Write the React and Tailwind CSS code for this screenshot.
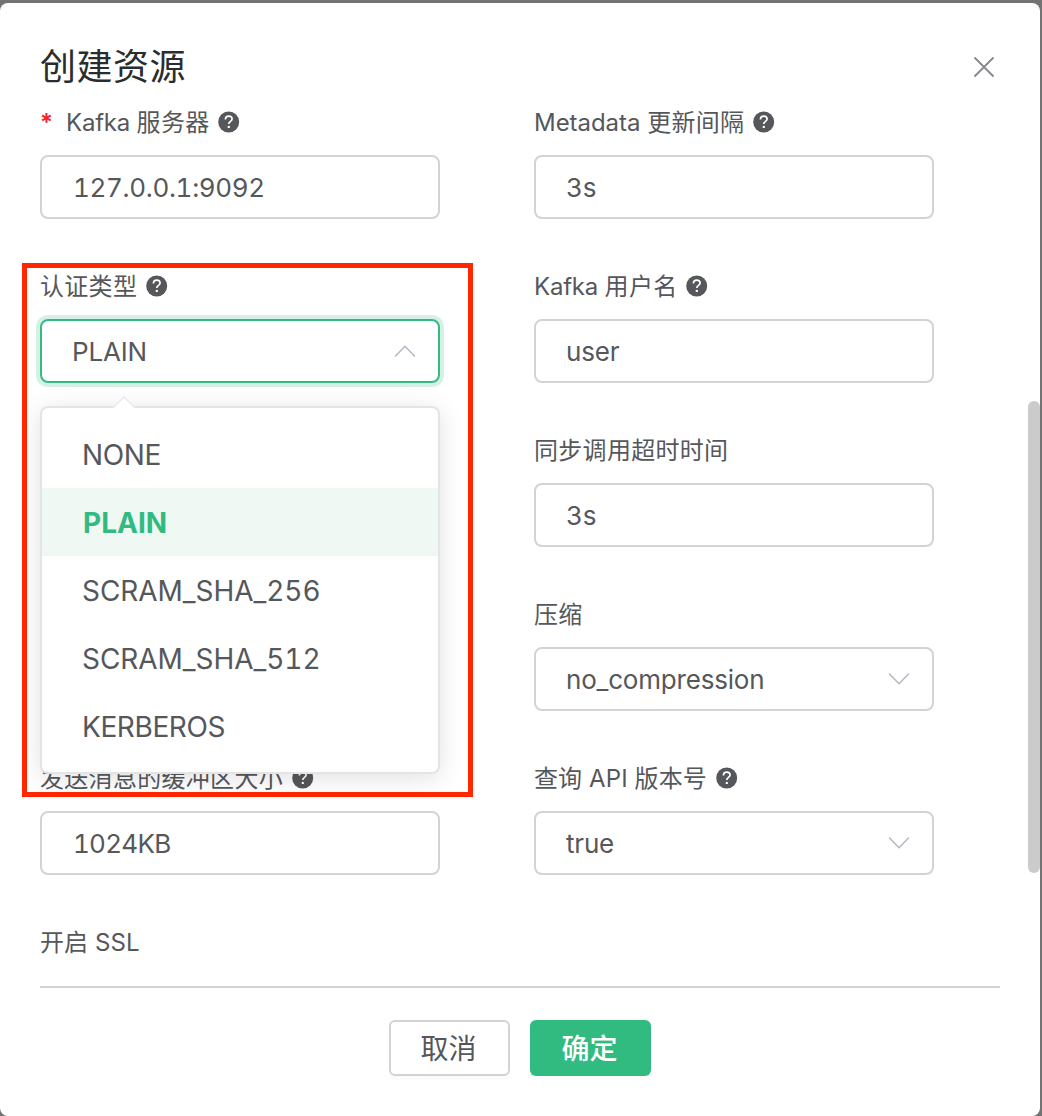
import React from "react";

const FIELD_ROWS = [
  [
    { latin: "Kafka ", label: "服务器", help: true, required: true, value: "127.0.0.1:9092", numeric: true },
    { latin: "Metadata ", label: "更新间隔", help: true, value: "3s", wide: true },
  ],
  [
    { label: "认证类型", help: true, value: "PLAIN", select: true, open: true },
    { latin: "Kafka ", label: "用户名", help: true, value: "user" },
  ],
  [null, { label: "同步调用超时时间", value: "3s" }],
  [null, { label: "压缩", value: "no_compression", select: true }],
  [
    { label: "发送消息的缓冲区大小", help: true, value: "1024KB", numeric: true, compact: true },
    { label: "查询 API 版本号", help: true, value: "true", select: true, tight: true },
  ],
];

const OPTIONS = ["NONE", "PLAIN", "SCRAM_SHA_256", "SCRAM_SHA_512", "KERBEROS"];

function HelpIcon() {
  return (
    <svg className="mb-0.5 ml-[9px] size-[22px] shrink-0" viewBox="0 0 22 22" fill="none">
      <circle cx="10.7" cy="11" r="10.5" fill="#56575b" />
      <path
        d="M7.4 8.5C7.4 6.3 8.8 5.1 10.8 5.1s3.3 1.2 3.3 3c0 2.4-3.3 2.2-3.3 4.8"
        stroke="#fff"
        strokeWidth="1.7"
      />
      <circle cx="10.8" cy="15.9" r="1.2" fill="#fff" />
    </svg>
  );
}

function Chevron({ up }) {
  return (
    <svg className="h-3 w-[22px]" viewBox="0 0 22 12" fill="none" stroke="#b4b8c2" strokeWidth="1.5" strokeLinecap="round">
      <path d={up ? "M1.5 11 11 1.2 20.5 11" : "M1.5 1 11 10.8 20.5 1"} strokeLinejoin="round" />
    </svg>
  );
}

function optionClass(name) {
  if (name === "PLAIN") {
    return "flex h-[68px] items-center bg-[#f0f8f4] pt-px pl-[41px] text-[28px] font-bold text-[#31bb80]";
  }
  if (name.startsWith("SCRAM")) {
    return "flex h-[68px] items-center pt-px pl-10 text-[28px] tracking-[-0.05px] tabular-nums";
  }
  return "flex h-[68px] items-center pt-px pl-10 text-[28px] tracking-[-0.4px]";
}

function Dropdown() {
  return (
    <ul className="absolute top-[85px] -left-0.5 z-10 h-[368px] w-[400px] rounded-lg border-2 border-[#e4e4e5] bg-white pt-[12px] shadow-[0_4px_24px_rgba(0,0,0,0.12)]">
      <svg className="absolute -top-[12px] left-[70px] h-[13px] w-6" viewBox="0 0 24 13">
        <path d="M1 12 12 1l11 11v1H1z" fill="#fff" />
        <path d="M1 12 12 1l11 11" fill="none" stroke="#e9ebf3" strokeWidth="1.6" />
      </svg>
      {OPTIONS.map((name) => (
        <li key={name} className={optionClass(name)}>
          {name}
        </li>
      ))}
    </ul>
  );
}

function valueClass({ numeric, compact }) {
  if (compact) return "text-[26px] tracking-[-0.75px] tabular-nums";
  if (numeric) return "text-[26px] tracking-[-0.33px] tabular-nums";
  return "text-[26px] tracking-[-0.2px] tabular-nums";
}

function Field({ field }) {
  if (!field) return <div className="w-[400px]" />;
  const { latin, label, help, required, value, select, open, numeric, tight, wide } = field;
  return (
    <div className="w-[400px]">
      <div className="flex h-16 items-center text-[24px] whitespace-nowrap">
        {required && <span className="w-[26px] font-semibold text-[#f5222d]">*</span>}
        {latin && (
          <span className={wide ? "tracking-[-0.04px] whitespace-pre" : "tracking-[-0.22px] whitespace-pre"}>{latin}</span>
        )}
        <span className={tight ? "tracking-[0.1px]" : "tracking-[0.3px]"}>{label}</span>
        {help && <HelpIcon />}
      </div>
      <div
        className={
          open
            ? "relative flex h-16 items-center justify-between rounded-lg border-2 border-[#31bb80] pr-[22px] pl-[30px] shadow-[0_0_0_4px_#d5f1e5]"
            : numeric
              ? "flex h-16 items-center justify-between rounded-lg border-2 border-[#d3d3d4] pr-[22px] pl-[31px]"
              : "flex h-16 items-center justify-between rounded-lg border-2 border-[#d3d3d4] pr-[22px] pl-[30px]"
        }
      >
        <span className={valueClass(field)}>{value}</span>
        {select && <Chevron up={open} />}
        {open && <Dropdown />}
      </div>
    </div>
  );
}

export default function App() {
  return (
    <div className="h-[1116px] w-[1042px] overflow-hidden bg-[#737373] pt-[3px] pr-0.5 font-['Inter','Noto_Sans_CJK_SC',sans-serif] text-[#56575b]">
      <main className="relative h-[1113px] w-[1040px] rounded-lg bg-white px-10">
        <header className="flex h-[88px] items-center justify-between pt-[39px] pb-0">
          <h1 className="text-[36px] leading-[48px] tracking-[0.5px] text-[#2b2c2e]">创建资源</h1>
          <button className="mr-[6px]" aria-label="关闭">
            <svg className="size-5" viewBox="0 0 20 20" stroke="#85878d" strokeWidth="1.8" strokeLinecap="round">
              <path d="m1 1 18 18M19 1 1 19" />
            </svg>
          </button>
        </header>
        <section className="flex flex-col gap-9">
          {FIELD_ROWS.map((row, i) => (
            <div key={i} className="flex h-32 gap-[94px]">
              <Field field={row[0]} />
              <Field field={row[1]} />
            </div>
          ))}
        </section>
        <div className="mt-9 flex h-[75px] items-start">
          <span className="flex h-16 items-center text-[24px] tracking-[0.1px]">开启 SSL</span>
        </div>
        <footer className="flex justify-center gap-5 border-t-2 border-[#d3d3d4] pt-8">
          <button className="h-14 w-[121px] rounded-md border-2 border-[#d3d3d4] pt-0.5 pr-0.5 text-[28px] leading-none shadow-[0_4px_0_rgba(0,0,0,0.016)]">取消</button>
          <button className="h-14 w-[121px] rounded-md bg-[#31bb80] pt-0.5 pr-0.5 text-[28px] leading-none font-medium text-white shadow-[0_4px_0_rgba(0,0,0,0.016)]">确定</button>
        </footer>
        <div className="absolute top-[398px] right-0 h-[472px] w-3 rounded-full bg-[#cbcbcb]" />
        <div className="absolute top-[260px] left-[22px] z-20 h-[534px] w-[451px] border-5 border-[#ff2600]" />
      </main>
    </div>
  );
}
